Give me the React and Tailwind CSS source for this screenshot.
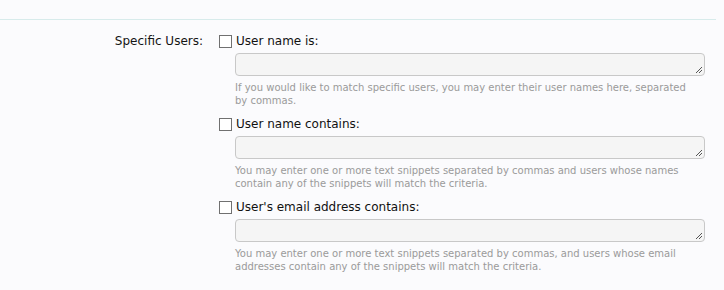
const ROWS = [
  {
    label: 'User name is:',
    hint: 'If you would like to match specific users, you may enter their user names here, separated by commas.',
  },
  {
    label: 'User name contains:',
    hint: 'You may enter one or more text snippets separated by commas and users whose names contain any of the snippets will match the criteria.',
  },
  {
    label: "User's email address contains:",
    hint: 'You may enter one or more text snippets separated by commas, and users whose email addresses contain any of the snippets will match the criteria.',
  },
]

export default function App() {
  return (
    <div className="h-[290px] w-[724px] overflow-hidden bg-[#fbfbfd] font-['DejaVu_Sans',sans-serif]">
      <div className="pt-[19px]">
        <div className="mr-[8px] h-px bg-[#d7ebeb]" />
      </div>

      <div className="flex pt-[14px]">
        <div className="w-[204px] shrink-0 pr-[1px] text-right text-[12px] leading-[15px] text-[#141414]">
          Specific Users:
        </div>
        <div className="ml-[15px] w-[486px]">
          {ROWS.map((r) => (
            <div key={r.label} className="mb-[10px]">
              <label className="flex items-center">
                <span className="h-[13px] w-[13px] shrink-0 border border-[#707070] bg-white" />
                <span className="ml-[4px] text-[12px] leading-[15px] text-[#111]">{r.label}</span>
              </label>
              <div className="relative ml-[16px] mt-[4px] h-[23px] rounded-[4px] border border-[#c8c8c8] bg-[#f5f5f5]">
                <svg className="absolute bottom-[1px] right-[1px]" width="9" height="9" viewBox="0 0 9 9">
                  <path d="M8 2L2 8M8 5L5 8" stroke="#555" strokeWidth="1" />
                </svg>
              </div>
              <p className="ml-[16px] mt-[5px] pr-[8px] text-[10px] leading-[13px] text-[#9a9a9a]">{r.hint}</p>
            </div>
          ))}
        </div>
      </div>
    </div>
  )
}
